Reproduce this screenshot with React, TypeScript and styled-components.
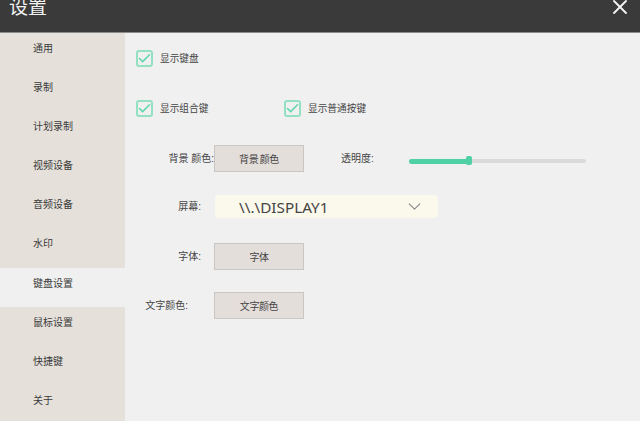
import React from "react";
import styled, { createGlobalStyle } from "styled-components";
import { Check, ChevronDown, X } from "lucide-react";

const GlobalStyle = createGlobalStyle`
  html, body {
    margin: 0;
    padding: 0;
    background: #f0f0f0;
  }
  body {
    font-family: "Liberation Sans", "Noto Sans CJK SC", sans-serif;
  }
`;

const Window = styled.div`
  width: 640px;
  height: 421px;
  display: flex;
  flex-direction: column;
  overflow: hidden;
  background: #f0f0f0;
`;

const TitleBar = styled.header`
  flex: 0 0 33px;
  box-sizing: border-box;
  height: 33px;
  display: flex;
  align-items: flex-start;
  justify-content: space-between;
  padding: 0 8px 0 9px;
  background: #3a3a3a;
  border-bottom: 1px solid #8c8c8c;
  overflow: hidden;
`;

const Title = styled.h1`
  margin: -6px 0 0;
  font-size: 19px;
  line-height: 28px;
  font-weight: 400;
  color: #f2f2f2;
`;

const CloseButton = styled.button`
  display: flex;
  margin: -5px 0 0;
  padding: 0;
  border: 0;
  background: none;
  color: #f4f4f4;
`;

const Body = styled.div`
  flex: 1;
  display: flex;
  min-height: 0;
`;

const Sidebar = styled.nav`
  flex: 0 0 125px;
  display: flex;
  flex-direction: column;
  background: #e5e1da;
`;

const NavItem = styled.div<{ $active?: boolean }>`
  flex: 0 0 39.2px;
  box-sizing: border-box;
  height: 39.2px;
  padding: 7.5px 0 0 33px;
  font-size: 10px;
  line-height: 15px;
  color: #3a3a3a;
  background: ${(p) => (p.$active ? "#f0f0f0" : "transparent")};
`;

const Content = styled.main`
  flex: 1;
  display: flex;
  flex-direction: column;
  padding: 17px 0 0 11px;
`;

const CheckRow = styled.div<{ $after: number }>`
  display: flex;
  align-items: center;
  height: 17px;
  margin-bottom: ${(p) => p.$after}px;
`;

const CheckItem = styled.label<{ $width?: number }>`
  display: flex;
  align-items: center;
  gap: 7px;
  width: ${(p) => (p.$width ? `${p.$width}px` : "auto")};
  font-size: 9.7px;
  line-height: 15px;
  color: #444;
`;

const CheckBox = styled.span`
  box-sizing: border-box;
  width: 17px;
  height: 17px;
  display: flex;
  align-items: center;
  justify-content: center;
  border: 2px solid #93e0c3;
  border-radius: 3px;
  color: #5fd6ac;
`;

const CheckMark = styled(Check)`
  flex: none;
`;

const FormRow = styled.div<{ $height: number; $after: number }>`
  display: flex;
  align-items: center;
  height: ${(p) => p.$height}px;
  margin-bottom: ${(p) => p.$after}px;
`;

const FieldLabel = styled.span<{ $right: number }>`
  flex: 0 0 78px;
  box-sizing: border-box;
  padding-right: ${(p) => p.$right}px;
  text-align: right;
  font-size: 10px;
  line-height: 15px;
  white-space: nowrap;
  color: #444;
`;

const ActionButton = styled.button`
  box-sizing: border-box;
  flex: 0 0 90px;
  height: 27px;
  padding: 0;
  background: #e4dedb;
  border: 1px solid #c9c6c4;
  font-family: inherit;
  font-size: 10px;
  letter-spacing: -0.4px;
  word-spacing: -1px;
  color: #444;
`;

const OpacityLabel = styled.span`
  margin-left: 37px;
  font-size: 10px;
  line-height: 15px;
  color: #444;
`;

const Slider = styled.div`
  position: relative;
  width: 177px;
  height: 4px;
  margin: 4px 0 0 35px;
  background: #dadada;
  border-radius: 2px;
`;

const SliderFill = styled.div`
  height: 5px;
  background: #4fd0a5;
  border-radius: 2.5px;
`;

const SliderThumb = styled.div`
  position: absolute;
  top: -2.5px;
  width: 6px;
  height: 9px;
  margin-left: -3px;
  background: #4fd0a5;
  border-radius: 2px;
`;

const Select = styled.div`
  flex: 0 0 223px;
  box-sizing: border-box;
  height: 23px;
  margin-left: 1px;
  display: flex;
  align-items: center;
  justify-content: space-between;
  padding: 0 13px 0 24px;
  background: #fbf8ec;
  border-radius: 4px;
  font-family: "Noto Sans", "Liberation Sans", sans-serif;
  font-size: 15.3px;
  color: #444;
`;

const MenuIcon = styled(ChevronDown)`
  color: #8a8a8a;
`;

const navItems = ["通用", "录制", "计划录制", "视频设备", "音频设备", "水印", "键盘设置", "鼠标设置", "快捷键", "关于"];
const opacity = 34;

export default function App() {
  return (
    <Window>
      <GlobalStyle />
      <TitleBar>
        <Title>设置</Title>
        <CloseButton aria-label="关闭">
          <X size={24} strokeWidth={1.8} />
        </CloseButton>
      </TitleBar>
      <Body>
        <Sidebar>
          {navItems.map((item) => (
            <NavItem key={item} $active={item === "键盘设置"}>
              {item}
            </NavItem>
          ))}
        </Sidebar>
        <Content>
          <CheckRow $after={33}>
            <CheckItem>
              <CheckBox>
                <CheckMark size={15} strokeWidth={2.4} />
              </CheckBox>
              显示键盘
            </CheckItem>
          </CheckRow>
          <CheckRow $after={28}>
            <CheckItem $width={148}>
              <CheckBox>
                <CheckMark size={15} strokeWidth={2.4} />
              </CheckBox>
              显示组合键
            </CheckItem>
            <CheckItem>
              <CheckBox>
                <CheckMark size={15} strokeWidth={2.4} />
              </CheckBox>
              显示普通按键
            </CheckItem>
          </CheckRow>
          <FormRow $height={27} $after={23}>
            <FieldLabel $right={0}>背景 颜色:</FieldLabel>
            <ActionButton>背景 颜色</ActionButton>
            <OpacityLabel>透明度:</OpacityLabel>
            <Slider>
              <SliderFill style={{ width: `${opacity}%` }} />
              <SliderThumb style={{ left: `${opacity}%` }} />
            </Slider>
          </FormRow>
          <FormRow $height={23} $after={25}>
            <FieldLabel $right={13}>屏幕:</FieldLabel>
            <Select>
              \\.\DISPLAY1
              <MenuIcon size={21} strokeWidth={1.3} />
            </Select>
          </FormRow>
          <FormRow $height={27} $after={22}>
            <FieldLabel $right={13}>字体:</FieldLabel>
            <ActionButton>字体</ActionButton>
          </FormRow>
          <FormRow $height={27} $after={0}>
            <FieldLabel $right={26}>文字颜色:</FieldLabel>
            <ActionButton>文字颜色</ActionButton>
          </FormRow>
        </Content>
      </Body>
    </Window>
  );
}
